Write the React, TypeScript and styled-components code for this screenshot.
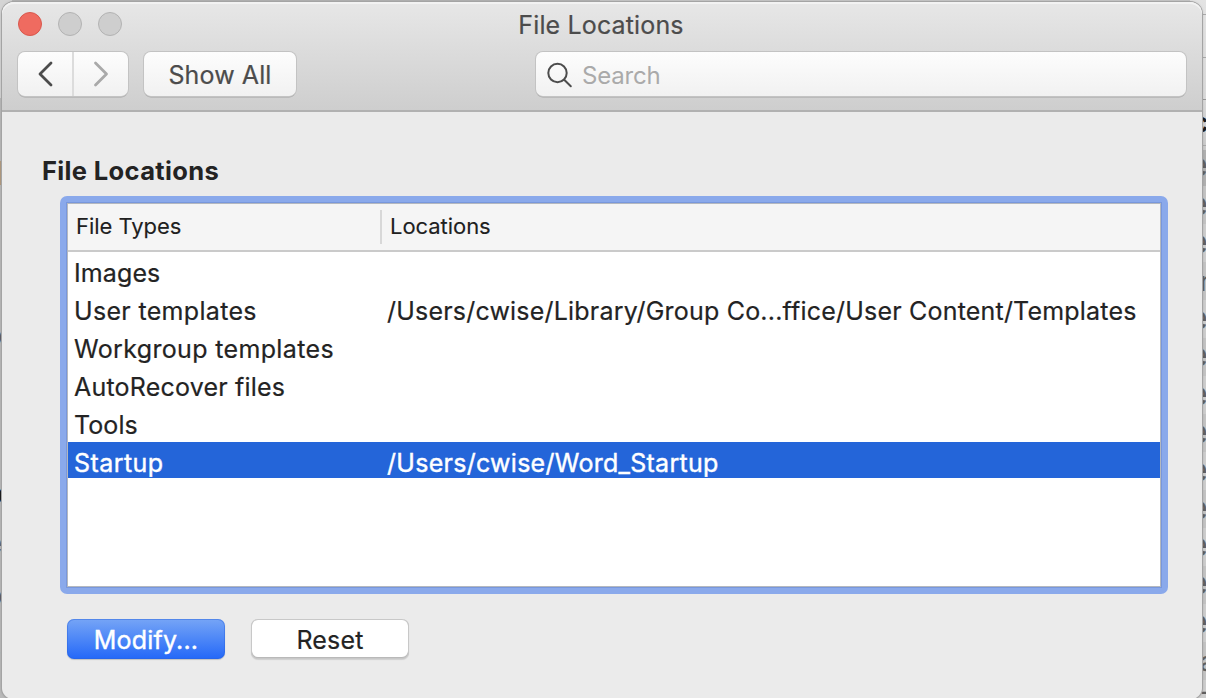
import React from "react";
import styled, { createGlobalStyle, css } from "styled-components";

const GlobalStyle = createGlobalStyle`
  *, *::before, *::after { box-sizing: border-box; }
  html, body { margin: 0; padding: 0; overflow: hidden; }
  body { font-family: Inter, "Liberation Sans", sans-serif; -webkit-text-stroke: 0.2px currentColor; }
  button, input { font: inherit; margin: 0; }
`;

const Desktop = styled.div`
  display: flex;
  width: 1206px;
  height: 698px;
  overflow: hidden;
  position: relative;
  background: linear-gradient(to right, #b5b5b5 0 600px, #c9c9c9 600px);
`;

const EdgeStrip = styled.div<{ $side: "left" | "right" }>`
  position: absolute;
  top: 0;
  bottom: 0;
  overflow: hidden;
  ${(p) =>
    p.$side === "left"
      ? css`left: 0; width: 12px; background: linear-gradient(#d4d4d4 0 98px, #b9b9b9 98px);`
      : css`
          right: 0; width: 16px;
          background:
            linear-gradient(#aaa, #aaa) 0 14px / 100% 1px no-repeat,
            linear-gradient(#aaa, #aaa) 0 57px / 100% 1px no-repeat,
            linear-gradient(#999, #999) 0 99px / 100% 1px no-repeat,
            linear-gradient(#aaa, #aaa) 0 145px / 100% 1px no-repeat,
            linear-gradient(#b0b0b0, #b0b0b0) 0 150px / 100% 36px no-repeat,
            repeating-linear-gradient(#c3c3c3 0 38px, #cdcdcd 38px 76px) 0 186px no-repeat,
            linear-gradient(#e3e3e3 0, #dadada 98px, #c9c9c9 150px);
        `}
`;

const EdgeGlyph = styled.span<{ $top: number; $left: number; $dark?: boolean; $large?: boolean }>`
  position: absolute;
  top: ${(p) => p.$top - (p.$large ? 19 : 18)}px;
  left: ${(p) => p.$left}px;
  line-height: 32px;
  font-size: ${(p) => (p.$large ? 32 : 26)}px;
  font-weight: ${(p) => (p.$dark ? 600 : 400)};
  color: ${(p) => (p.$dark ? "#1c1c1c" : "#606060")};
`;

const Dialog = styled.main`
  position: relative;
  display: flex;
  flex-direction: column;
  width: 1200px;
  height: 697px;
  margin: 2px 0 0 2px;
  background: #ebebeb;
  border-radius: 12px 12px 11px 11px;
  box-shadow: 0 0 0 1px #a4a4a4, 0 0 3px rgba(0, 0, 0, 0.25);
`;

const TitleBar = styled.header`
  height: 110px;
  flex: none;
  padding: 0 16px;
  border-radius: 12px 12px 0 0;
  border-bottom: 2px solid #b1b1b1;
  background: linear-gradient(#e7e7e7, #cecece);
  box-shadow: inset 0 2px 0 #f2f2f2;
`;

const TitleRow = styled.div`
  display: grid;
  grid-template-columns: 1fr auto 1fr;
  align-items: center;
  height: 44px;
`;

const Lights = styled.div`
  display: flex;
  gap: 16px;
`;

const Light = styled.span<{ $active?: boolean }>`
  width: 24px;
  height: 24px;
  border-radius: 50%;
  border: 1px solid ${(p) => (p.$active ? "#d9584d" : "#b3b3b3")};
  background: ${(p) => (p.$active ? "#ef6b60" : "#cecece")};
`;

const Title = styled.h1`
  margin: 2px 2px 0 0;
  font-size: 25px;
  line-height: 32px;
  font-weight: 400;
  letter-spacing: 0.15px;
  color: #4c4c4c;
`;

const Toolbar = styled.div`
  display: flex;
  height: 44px;
  margin-top: 6px;
`;

const controlFace = css`
  border: 0;
  border-radius: 7px;
  background: linear-gradient(#fdfdfd, #f1f1f1);
  box-shadow: 0 0 0 1px #c3c3c3, 0 1.5px 0 #a3a3a3;
`;

const NavGroup = styled.div`
  ${controlFace}
  display: flex;
  width: 110px;
`;

const NavButton = styled.button<{ $muted?: boolean }>`
  display: grid;
  place-items: center;
  width: ${(p) => (p.$muted ? 56 : 54)}px;
  padding: 0 ${(p) => (p.$muted ? 0 : 1)}px 0 0;
  border: 0;
  background: none;
  color: ${(p) => (p.$muted ? "#a9a9a9" : "#4c4c4c")};
  & + & { border-left: 2px solid #dcdcdc; }
`;

const ShowAll = styled.button`
  ${controlFace}
  width: 152px;
  margin-left: 16px;
  padding: 2px 0 0;
  font-size: 25px;
  letter-spacing: 0.1px;
  color: #4c4c4c;
`;

const SearchField = styled.label`
  ${controlFace}
  display: flex;
  align-items: center;
  width: 650px;
  margin-left: auto;
  padding-left: 10px;
  gap: 8px;
  color: #4c4c4c;
  svg { margin-top: 2px; }
`;

const Placeholder = styled.span`
  padding-top: 3px;
  font-size: 24px;
  letter-spacing: -0.2px;
  color: #aaa;
  -webkit-text-stroke: 0;
`;

const Body = styled.section`
  padding: 42px 34px 0 40px;
`;

const Heading = styled.h2`
  margin: 0;
  font-size: 25.5px;
  line-height: 34px;
  font-weight: 700;
  letter-spacing: 0.35px;
  color: #232323;
  -webkit-text-stroke: 0;
`;

const FocusRing = styled.div`
  width: 1108px;
  height: 398px;
  margin: 8px 0 0 18px;
  padding: 6px;
  border-radius: 7px;
  background: #8aa9eb;
`;

const Table = styled.div`
  height: 386px;
  border: 1px solid #7897dc;
  outline: 1px solid #b4b8bf;
  outline-offset: -2px;
  padding: 1px;
  background: #fff;
`;

const columns = css`
  display: grid;
  grid-template-columns: 312px 1fr;
  align-items: center;
`;

const TableHead = styled.div`
  ${columns}
  height: 48px;
  border-bottom: 2px solid #cacaca;
  background: #f5f5f5;
`;

const HeadCell = styled.div<{ $divided?: boolean }>`
  height: 34px;
  padding-left: 8px;
  font-size: 22px;
  line-height: 32px;
  letter-spacing: -0.05px;
  color: #202020;
  -webkit-text-stroke: 0.1px;
  ${(p) => p.$divided && css`border-left: 2px solid #d8d8d8;`}
`;

const Row = styled.div<{ $selected?: boolean }>`
  ${columns}
  align-items: start;
  height: 36px;
  margin-bottom: 2px;
  font-size: 25px;
  line-height: 42px;
  color: ${(p) => (p.$selected ? "#fff" : "#232323")};
  background: ${(p) => (p.$selected ? "#2465d9" : "transparent")};
  ${(p) => p.$selected && css`-webkit-text-stroke: 0.4px;`}
`;

const Cell = styled.span<{ $spacing?: number }>`
  padding-left: 7px;
  white-space: nowrap;
  letter-spacing: ${(p) => p.$spacing ?? 0}px;
  &:first-child { padding-left: 6px; }
`;

const Actions = styled.div`
  display: flex;
  gap: 26px;
  margin: 25px 0 0 25px;
`;

const PushButton = styled.button<{ $primary?: boolean }>`
  width: 158px;
  height: 40px;
  padding: 2px 0 0;
  border: 0;
  border-radius: 7px;
  font-size: 25px;
  line-height: 36px;
  letter-spacing: 0.2px;
  color: #232323;
  background: #fff;
  box-shadow: inset 0 0 0 1px #c8c8c8, inset 0 -1px 0 1px #b9b9b9, 0 1px 1px rgba(0, 0, 0, 0.12);
  ${(p) =>
    p.$primary &&
    css`
      color: #fff;
      background: linear-gradient(#76a5f6, #2468f8);
      -webkit-text-stroke: 0.4px;
      box-shadow: inset 0 0 0 1px rgba(42, 99, 220, 0.45), 0 1px 1px rgba(0, 0, 0, 0.18);
    `}
`;

const rows = [
  { type: "Images", spacing: 0.1 },
  { type: "User templates", spacing: 0.32, path: "/Users/cwise/Library/Group Co...ffice/User Content/Templates", pathSpacing: 0.2 },
  { type: "Workgroup templates", spacing: 0.35 },
  { type: "AutoRecover files", spacing: 0.2 },
  { type: "Tools", spacing: 0.1 },
  { type: "Startup", spacing: 0.45, path: "/Users/cwise/Word_Startup", pathSpacing: 0.28, selected: true },
];

const rightGlyphs: [string, number][] = [
  ["e", 168], ["e", 207], ["e", 245], ["r", 284], ["e", 321], ["e", 358], ["e", 397],
  ["e", 435], ["e", 473], ["e", 511], ["e", 548], ["e", 586], ["e", 625], ["a", 664], ["-", 694],
];

const leftGlyphs: [string, number][] = [
  ["o", 338], ["s", 390], ["p", 496], ["e", 546], ["o", 598], ["s", 650],
];

const Chevron = ({ flip }: { flip?: boolean }) => (
  <svg width="16" height="28" viewBox="0 0 16 28" fill="none" stroke="currentColor" strokeWidth="2.8" strokeLinecap="round" strokeLinejoin="round">
    <path d={flip ? "M2.5 3 13.5 14 2.5 25" : "M14 3 3 14 14 25"} />
  </svg>
);

export default function App() {
  return (
    <>
      <GlobalStyle />
      <Desktop>
        <EdgeStrip $side="left">
          <EdgeGlyph $top={174} $left={-2}>[</EdgeGlyph>
          {leftGlyphs.map(([g, y]) => (
            <EdgeGlyph key={y} $top={y} $left={-13} $dark={g === "p"}>{g}</EdgeGlyph>
          ))}
        </EdgeStrip>
        <EdgeStrip $side="right">
          <EdgeGlyph $top={125} $left={3} $dark>c</EdgeGlyph>
          {rightGlyphs.map(([g, y]) => (
            <EdgeGlyph key={y} $top={y} $left={g === "e" ? -1 : 10} $large={g === "e"}>{g}</EdgeGlyph>
          ))}
        </EdgeStrip>
        <Dialog>
          <TitleBar>
            <TitleRow>
              <Lights>
                <Light $active />
                <Light />
                <Light />
              </Lights>
              <Title>File Locations</Title>
            </TitleRow>
            <Toolbar>
              <NavGroup>
                <NavButton aria-label="Back"><Chevron /></NavButton>
                <NavButton aria-label="Forward" $muted><Chevron flip /></NavButton>
              </NavGroup>
              <ShowAll>Show All</ShowAll>
              <SearchField>
                <svg width="28" height="28" viewBox="0 0 28 28" fill="none" stroke="currentColor" strokeWidth="2" strokeLinecap="round">
                  <circle cx="11.5" cy="12" r="9.2" />
                  <path d="m18.2 18.7 6.6 6.6" />
                </svg>
                <Placeholder>Search</Placeholder>
              </SearchField>
            </Toolbar>
          </TitleBar>
          <Body>
            <Heading>File Locations</Heading>
            <FocusRing>
              <Table>
                <TableHead>
                  <HeadCell>File Types</HeadCell>
                  <HeadCell $divided>Locations</HeadCell>
                </TableHead>
                {rows.map((r) => (
                  <Row key={r.type} $selected={r.selected}>
                    <Cell $spacing={r.spacing}>{r.type}</Cell>
                    <Cell $spacing={r.pathSpacing}>{r.path}</Cell>
                  </Row>
                ))}
              </Table>
            </FocusRing>
            <Actions>
              <PushButton $primary>Modify...</PushButton>
              <PushButton>Reset</PushButton>
            </Actions>
          </Body>
        </Dialog>
      </Desktop>
    </>
  );
}
